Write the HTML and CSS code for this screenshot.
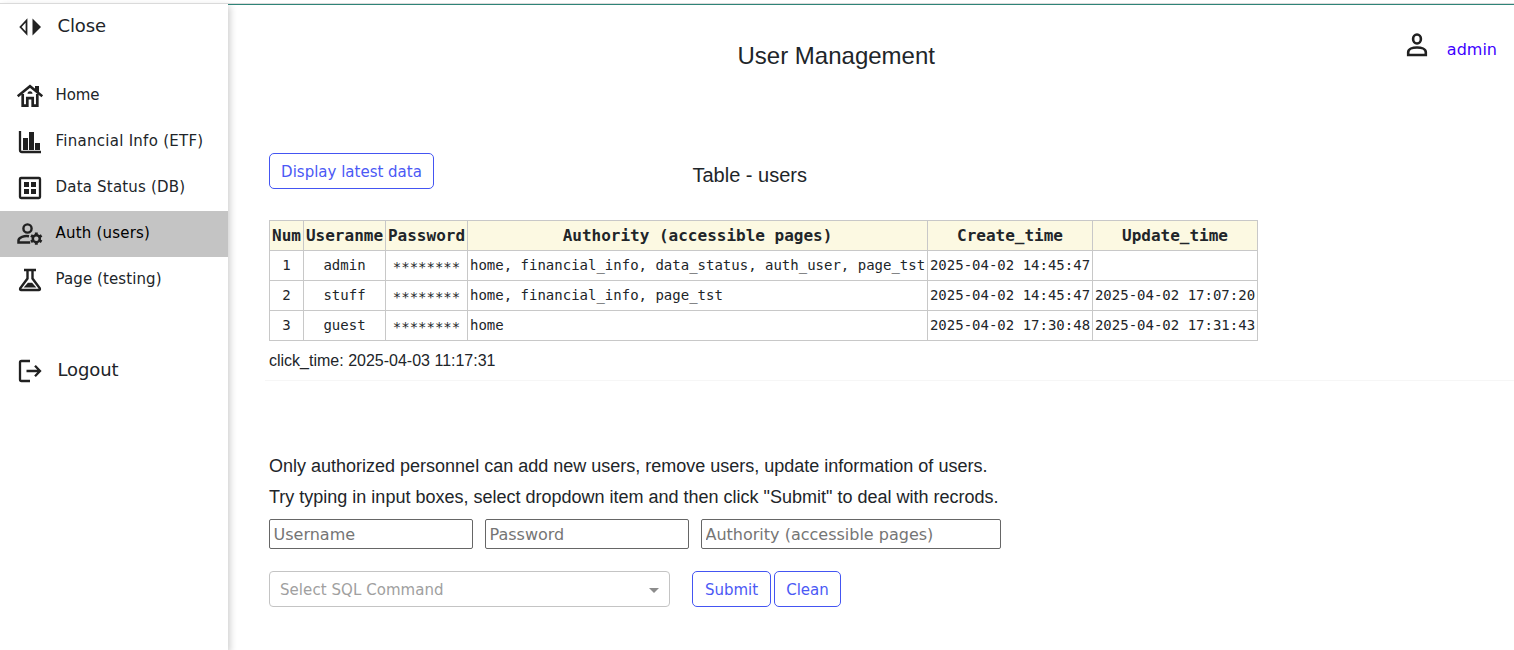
FILE: index.html
```html
<!DOCTYPE html>
<html lang="en">
<head>
<meta charset="utf-8">
<title>User Management</title>
<link rel="stylesheet" href="styles.css">
</head>
<body>
<nav class="sidebar">
  <a class="item toggle"><svg class="icon" viewBox="0 0 30 30"><path d="M11.500 8.500v13L5.500 15z" fill="none" stroke="currentColor" stroke-width="1.800"/><path d="M17.500 6.600v16.800L26 15z"/></svg><span>Close</span></a>
  <a class="item home"><svg class="icon" viewBox="0 0 30 30"><path d="M2.700 15.200 15 5.200l12.300 10" fill="none" stroke="currentColor" stroke-width="2.500"/><path d="M20 5h4v8l-4-3.300z"/><path d="M7.700 13v11.700h4.600v-7.500h5.400v7.500h4.600V13" fill="none" stroke="currentColor" stroke-width="2.700"/><path d="M12.500 12.800a2.500 2.500 0 0 1 5 0z"/></svg><span>Home</span></a>
  <a class="item financial"><svg class="icon" viewBox="0 0 30 30"><path d="M5 4v19q0 2 2 2h19" fill="none" stroke="currentColor" stroke-width="2.300"/><path d="M8 11h5v12H8zM14 5h5v18h-5zM20 16h5v7h-5z"/></svg><span>Financial Info (ETF)</span></a>
  <a class="item data"><svg class="icon" viewBox="0 0 30 30"><rect x="5" y="5" width="20" height="20" rx="1" fill="none" stroke="currentColor" stroke-width="2.300"/><path d="M9 9h5v5H9zM16 9h5v5h-5zM9 16h5v5H9zM16 16h5v5h-5z"/></svg><span>Data Status (DB)</span></a>
  <a class="item auth active"><svg class="icon" viewBox="0 0 30 30"><circle cx="12.500" cy="9.500" r="4.100" fill="none" stroke="currentColor" stroke-width="2.400"/><path d="M14 17.300c-4.500-.8-10.500 1-10.500 4.300v2h11.700" fill="none" stroke="currentColor" stroke-width="2.500"/><g fill="none" stroke="currentColor"><circle cx="21.300" cy="19.700" r="3.500" stroke-width="2.500"/><path d="M21.300 13.600v3M21.300 22.800v3M16 16.600l2.600 1.500M24 21.300l2.600 1.500M16 22.800l2.600-1.500M24 18.100l2.600-1.500" stroke-width="2.900"/></g></svg><span>Auth (users)</span></a>
  <a class="item page"><svg class="icon" viewBox="0 0 30 30"><path d="M9 5h12M12.500 5v8.500L5.200 23.400q-.5 1.600 1 1.600h17.600q1.500 0 1-1.600L17.500 13.500V5" fill="none" stroke="currentColor" stroke-width="2.400"/><path d="m8.700 22.600 4.200-4.800h4.200l4.200 4.800z"/></svg><span>Page (testing)</span></a>
  <a class="item logout"><svg class="icon" viewBox="0 0 30 30"><path d="M15 5H6.500Q5 5 5 6.500V23.500Q5 25 6.500 25H15M11.500 15H25M20 9.800 25 15l-5 5.200" fill="none" stroke="currentColor" stroke-width="2.300"/></svg><span>Logout</span></a>
</nav>
<main class="main">
  <header class="header">
    <h1>User Management</h1>
    <div class="account"><svg class="person" viewBox="0 0 30 30"><ellipse cx="15" cy="9" rx="3.900" ry="4.500" fill="none" stroke="currentColor" stroke-width="2.600"/><path d="M6.200 25v-2.800c0-6.300 17.600-6.300 17.600 0V25z" fill="none" stroke="currentColor" stroke-width="2.600"/></svg><a href="#">admin</a></div>
  </header>
  <section class="users">
    <div class="bar"><button class="btn display">Display latest data</button><h2>Table - users</h2></div>
    <table>
      <colgroup><col class="c-num"><col class="c-name"><col class="c-name"><col class="c-auth"><col class="c-time"><col class="c-time"></colgroup>
      <tr><th>Num</th><th>Useranme</th><th>Password</th><th>Authority (accessible pages)</th><th>Create_time</th><th>Update_time</th></tr>
      <tr><td>1</td><td>admin</td><td class="mask">********</td><td class="left">home, financial_info, data_status, auth_user, page_tst</td><td>2025-04-02 14:45:47</td><td></td></tr>
      <tr><td>2</td><td>stuff</td><td class="mask">********</td><td class="left">home, financial_info, page_tst</td><td>2025-04-02 14:45:47</td><td>2025-04-02 17:07:20</td></tr>
      <tr><td>3</td><td>guest</td><td class="mask">********</td><td class="left">home</td><td>2025-04-02 17:30:48</td><td>2025-04-02 17:31:43</td></tr>
    </table>
    <p class="click">click_time: 2025-04-03 11:17:31</p>
  </section>
  <section class="edit">
    <p>Only authorized personnel can add new users, remove users, update information of users.</p>
    <p>Try typing in input boxes, select dropdown item and then click "Submit" to deal with recrods.</p>
    <div class="fields"><input placeholder="Username"><input placeholder="Password"><input class="wide" placeholder="Authority (accessible pages)"></div>
    <div class="actions"><div class="select"><span>Select SQL Command</span><i class="arrow"></i></div><button class="btn submit">Submit</button><button class="btn clean">Clean</button></div>
  </section>
</main>
</body>
</html>
```
FILE: styles.css
```css
* { box-sizing: border-box; }
body {
  margin: 0; height: 650px; padding-top: 3px; display: flex; overflow: hidden;
  background: #fff; color: #212529; font-family: "Liberation Sans", Arial, sans-serif;
}
h1, h2, p { margin: 0; font-weight: 400; white-space: nowrap; }
.sidebar {
  width: 228px; flex: none; border-top: 1px solid #dadada;
  box-shadow: 2px 3px 7px rgba(0, 0, 0, .2);
  font-family: Verdana, "DejaVu Sans", sans-serif; font-size: 15px;
}
.item { display: flex; align-items: center; height: 46px; padding: 0 0 0 15px; white-space: nowrap; letter-spacing: -.1px; }
.item span { margin: -2px 0 0 10.500px; }
.icon, .person { width: 30px; height: 30px; fill: #212121; color: #212121; flex: none; }
.toggle, .logout { font-size: 18px; }
.toggle span, .logout span { margin: -4px 0 0 12.500px; }
.home { margin-top: 23px; }
.financial { letter-spacing: .27px; }
.data { letter-spacing: .2px; }
.auth { letter-spacing: .2px; }
.page { letter-spacing: .1px; }
.active { background: #c4c4c4; color: #000; }
.logout { margin-top: 45px; }
.main { flex: 1; min-width: 0; border-top: 1px solid #dadada; }
.header {
  height: 149px; border-top: 1px solid #2f8478; display: flex; justify-content: space-between;
  align-items: flex-start; padding: 37px 17px 0 509.500px;
}
h1 { font-size: 24px; line-height: 28px; }
.account { display: flex; margin-top: -12px; gap: 15px; font: 16px/30px Verdana, "DejaVu Sans", sans-serif; }
.account a { color: #4000ff; text-decoration: none; padding-top: 5px; }
.users { margin-left: 37px; padding-left: 4px; height: 228px; border-bottom: 1px solid #f6f6f6; }
.bar { display: flex; height: 67px; }
.btn {
  height: 36px; border: 1px solid #4455f2; border-radius: 5px; background: #fff; color: #4b59f5;
  padding: 2px 0 0; font: 15px/32px Verdana, "DejaVu Sans", sans-serif; white-space: nowrap;
}
.display { width: 165px; }
h2 { font-size: 20px; line-height: 24px; margin: 10px 0 0 258.500px; }
table { table-layout: fixed; width: 989px; border-collapse: collapse; font: 14px/17px "DejaVu Sans Mono", monospace; }
.c-num { width: 34px; } .c-name { width: 82px; } .c-auth { width: 460px; } .c-time { width: 165px; }
th, td { height: 30px; border: 1px solid #c8c8c8; padding: 0; text-align: center; white-space: nowrap; }
th { background: #fcf9e2; font-size: 16px; }
.left { text-align: left; padding-left: 2px; }
.mask { padding-top: 4px; }
.click { font-size: 16px; line-height: 20px; margin-top: 10px; }
.edit { padding: 70px 0 0 41px; font-size: 18px; line-height: 31px; }
.fields { display: flex; gap: 12px; margin-top: 6px; }
input {
  width: 204px; height: 30px; border: 1px solid #666; border-radius: 2px; padding: 0 3.500px;
  font: 16px Verdana, "DejaVu Sans", sans-serif;
}
input::placeholder { color: #757575; }
.wide { width: 300px; }
.actions { display: flex; margin-top: 22px; }
.select {
  width: 401px; height: 36px; border: 1px solid #c4c4c4; border-radius: 4px; padding: 0 10px;
  display: flex; align-items: center; justify-content: space-between; color: #a0a0a0;
  font: 15px Verdana, "DejaVu Sans", sans-serif;
}
.select span { padding-top: 2px; letter-spacing: .06px; }
.arrow { border: 5px solid transparent; border-top-color: #8c8c8c; border-bottom: 0; margin-top: 2px; }
.submit { width: 79px; margin-left: 22px; }
.clean { width: 67px; margin-left: 3px; }
```
